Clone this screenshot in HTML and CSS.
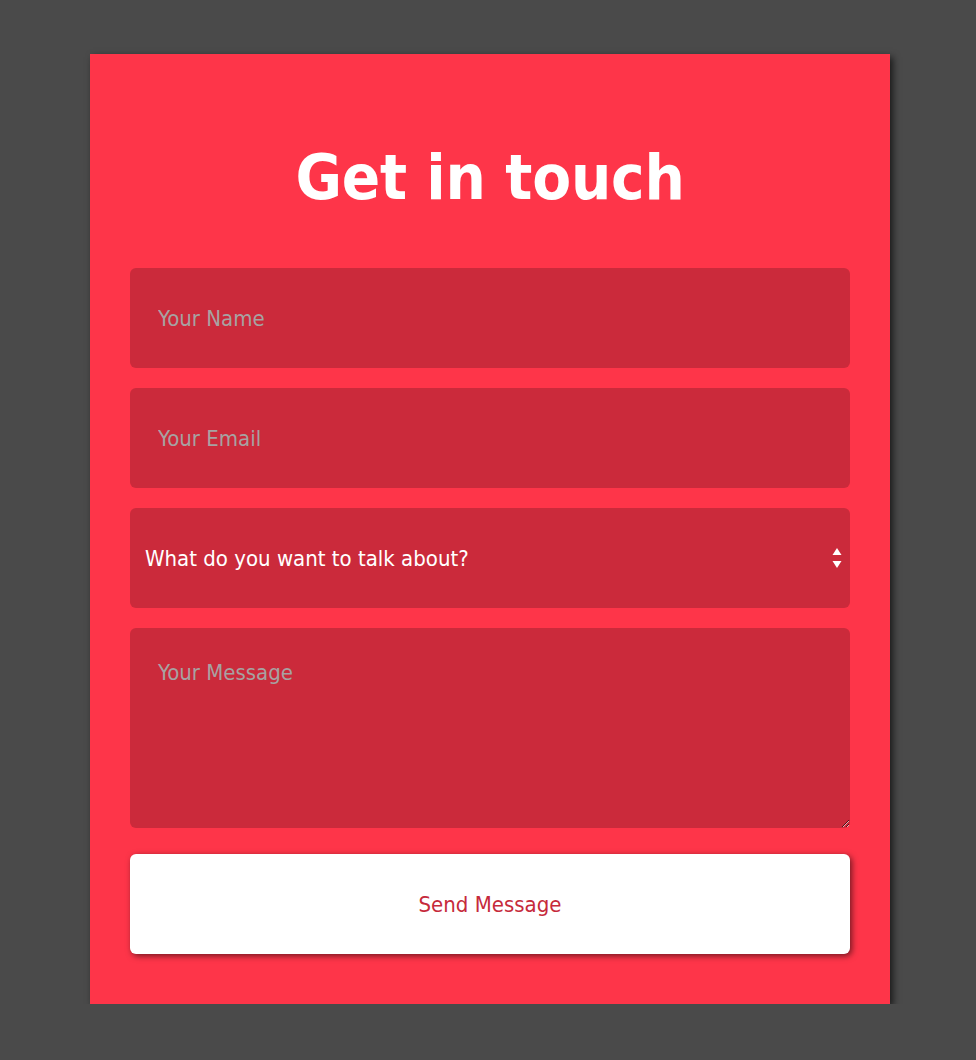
FILE: index.html
```html
<!DOCTYPE html>
<html lang="en">
<head>
    <meta charset="UTF-8">
    <meta name="viewport" content="width=device-width, initial-scale=1.0">
    <title>Get in touch</title>
    <link rel="stylesheet" href="styles.css">
</head>
<body>
    <div class="contact-card">
        <h1>Get in touch</h1>
        <form id="contact-form">
            <input type="text" class="field" placeholder="Your Name">
            <input type="email" class="field" placeholder="Your Email">

            <div class="select-wrap">
                <select class="field select-field">
                    <option>What do you want to talk about?</option>
                    <option>General question</option>
                    <option>Project enquiry</option>
                    <option>Something else</option>
                </select>
                <svg class="select-arrows" width="10" height="22" viewBox="0 0 10 22">
                    <path d="M5 1 L9.5 8 L0.5 8 Z" fill="#fff"/>
                    <path d="M0.5 14 L9.5 14 L5 21 Z" fill="#fff"/>
                </svg>
            </div>

            <textarea class="field message-field" placeholder="Your Message"></textarea>

            <button type="button" class="send-btn">Send Message</button>
        </form>
    </div>
</body>
</html>
```

FILE: styles.css
```css
body {
    font-family: 'DejaVu Sans Condensed', 'DejaVu Sans', sans-serif;
    background-color: #4a4a4a;
    margin: 0;
    padding: 0 0 0 4px;
}

.contact-card {
    width: 800px;
    box-sizing: border-box;
    margin: 54px auto 0;
    padding: 86px 40px 50px;
    background-color: #fe3549;
    box-shadow: 3px 3px 7px rgba(0, 0, 0, 0.65);
}

h1 {
    margin: 0 0 52px;
    color: #fff;
    font-size: 63px;
    line-height: 76px;
    font-weight: bold;
    text-align: center;
    letter-spacing: -0.2px;
}

form {
    display: flex;
    flex-direction: column;
}

.field {
    display: block;
    width: 100%;
    height: 100px;
    box-sizing: border-box;
    margin: 0 0 20px;
    padding: 0 28px;
    border: none;
    border-radius: 6px;
    background-color: #cb2a3b;
    color: #fff;
    font-family: inherit;
    font-size: 22px;
    outline: none;
}

.field::placeholder {
    color: #a7a2a2;
    opacity: 1;
}

.select-wrap {
    position: relative;
}

.select-field {
    appearance: none;
    -webkit-appearance: none;
    padding-left: 15px;
    cursor: pointer;
}

.select-arrows {
    position: absolute;
    right: 8px;
    top: 39px;
    pointer-events: none;
}

.message-field {
    height: 200px;
    padding-top: 32px;
    resize: vertical;
}

.send-btn {
    height: 100px;
    margin-top: 6px;
    border: none;
    border-radius: 6px;
    background-color: #fff;
    color: #c62a3b;
    font-family: inherit;
    font-size: 22px;
    cursor: pointer;
    box-shadow: 2px 2px 6px rgba(0, 0, 0, 0.55);
}
```
